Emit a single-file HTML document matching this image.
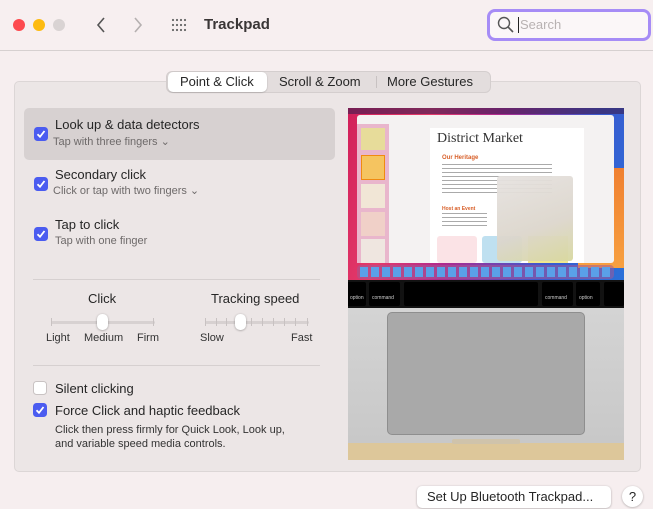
<!DOCTYPE html>
<html><head><meta charset="utf-8"><style>
*{margin:0;padding:0;box-sizing:border-box}
body{width:653px;height:509px;background:#f6eeef;font-family:"Liberation Sans",sans-serif;position:relative;overflow:hidden;color:#262626}
.a{position:absolute}
.cb{position:absolute;width:14px;height:14px;border-radius:3.5px;background:#4b5cf0;}
.cb svg{position:absolute;left:2px;top:2px}
.t{font-size:13px;color:#262626;white-space:nowrap}
.s{font-size:11px;color:#6e6a6a;white-space:nowrap}
</style></head><body>
<div class="a" style="left:0;top:0;width:653px;height:51px;background:#f7eff0;border-bottom:1px solid #d6d0d0"></div>
<div class="a" style="left:13px;top:19px;width:12px;height:12px;border-radius:50%;background:#fd4a4f"></div>
<div class="a" style="left:33px;top:19px;width:12px;height:12px;border-radius:50%;background:#fdbb10"></div>
<div class="a" style="left:53px;top:19px;width:12px;height:12px;border-radius:50%;background:#d9d3d3"></div>
<svg class="a" style="left:95px;top:16px" width="12" height="18"><path d="M9 2 L3 9 L9 16" stroke="#555" stroke-width="1.6" fill="none"/></svg>
<svg class="a" style="left:132px;top:16px" width="12" height="18"><path d="M3 2 L9 9 L3 16" stroke="#b5b0b0" stroke-width="1.6" fill="none"/></svg>
<svg class="a" style="left:171px;top:18px" width="18" height="14" fill="#666">
<circle cx="2" cy="2" r="1.1"/><circle cx="6" cy="2" r="1.1"/><circle cx="10" cy="2" r="1.1"/><circle cx="14" cy="2" r="1.1"/>
<circle cx="2" cy="7" r="1.1"/><circle cx="6" cy="7" r="1.1"/><circle cx="10" cy="7" r="1.1"/><circle cx="14" cy="7" r="1.1"/>
<circle cx="2" cy="12" r="1.1"/><circle cx="6" cy="12" r="1.1"/><circle cx="10" cy="12" r="1.1"/><circle cx="14" cy="12" r="1.1"/></svg>
<div class="a" style="left:204px;top:16px;font-size:15px;font-weight:bold;color:#3a3636">Trackpad</div>
<div class="a" style="left:487px;top:9px;width:164px;height:32px;border:3px solid #a68cf6;border-radius:8px;background:#fbf7f8"></div>
<svg class="a" style="left:497px;top:16px" width="18" height="18"><circle cx="7" cy="7" r="5.5" stroke="#555" stroke-width="1.4" fill="none"/><path d="M11 11 L16 16" stroke="#555" stroke-width="1.6"/></svg>
<div class="a" style="left:518px;top:17px;width:1px;height:16px;background:#222"></div>
<div class="a" style="left:520px;top:17px;font-size:13px;color:#b8b2b2">Search</div>
<div class="a" style="left:14px;top:81px;width:627px;height:391px;background:#ece6e6;border:1px solid #dcd6d6;border-radius:5px"></div>
<div class="a" style="left:166px;top:71px;width:325px;height:22px;background:#e3dddd;border:1px solid #d4cece;border-radius:6px"></div>
<div class="a" style="left:168px;top:72px;width:99px;height:20px;background:#fff;border-radius:5px;box-shadow:0 0.5px 1.5px rgba(0,0,0,.25)"></div>
<div class="a t" style="left:180px;top:74px">Point &amp; Click</div>
<div class="a t" style="left:279px;top:74px">Scroll &amp; Zoom</div>
<div class="a" style="left:376px;top:76px;width:1px;height:12px;background:#c8c2c2"></div>
<div class="a t" style="left:387px;top:74px">More Gestures</div>
<div class="a" style="left:24px;top:108px;width:311px;height:52px;background:#d7d1d1;border-radius:5px"></div>
<div class="cb" style="left:34px;top:127px"><svg width="10" height="10"><path d="M1.5 5.2 L4 7.8 L8.5 2" stroke="#fff" stroke-width="1.8" fill="none"/></svg></div>
<div class="a t" style="left:55px;top:117px">Look up &amp; data detectors</div>
<div class="a s" style="left:53px;top:135px">Tap with three fingers ⌄</div>
<div class="cb" style="left:34px;top:177px"><svg width="10" height="10"><path d="M1.5 5.2 L4 7.8 L8.5 2" stroke="#fff" stroke-width="1.8" fill="none"/></svg></div>
<div class="a t" style="left:55px;top:167px">Secondary click</div>
<div class="a s" style="left:53px;top:184px">Click or tap with two fingers ⌄</div>
<div class="cb" style="left:34px;top:227px"><svg width="10" height="10"><path d="M1.5 5.2 L4 7.8 L8.5 2" stroke="#fff" stroke-width="1.8" fill="none"/></svg></div>
<div class="a t" style="left:55px;top:217px">Tap to click</div>
<div class="a s" style="left:55px;top:235px">Tap with one finger</div>
<div class="a" style="left:33px;top:279px;width:287px;height:1px;background:#d6d0d0"></div>
<div class="a t" style="left:88px;top:291px">Click</div>
<div class="a" style="left:51px;top:321px;width:104px;height:3px;background:#d7d1d1;border-radius:2px"></div>
<div class="a" style="left:51px;top:318px;width:1px;height:8px;background:#c8c2c2"></div>
<div class="a" style="left:153px;top:318px;width:1px;height:8px;background:#c8c2c2"></div>
<div class="a" style="left:97px;top:314px;width:11px;height:16px;background:#fff;border-radius:5px;box-shadow:0 0.5px 2px rgba(0,0,0,.35)"></div>
<div class="a s" style="left:46px;top:332px;color:#333">Light</div>
<div class="a s" style="left:84px;top:332px;color:#333">Medium</div>
<div class="a s" style="left:137px;top:332px;color:#333">Firm</div>
<div class="a t" style="left:211px;top:291px">Tracking speed</div>
<div class="a" style="left:205px;top:321px;width:104px;height:3px;background:#d7d1d1;border-radius:2px"></div>
<div class="a" style="left:205px;top:318px;width:1px;height:8px;background:#c8c2c2"></div>
<div class="a" style="left:216px;top:318px;width:1px;height:8px;background:#c8c2c2"></div>
<div class="a" style="left:226px;top:318px;width:1px;height:8px;background:#c8c2c2"></div>
<div class="a" style="left:251px;top:318px;width:1px;height:8px;background:#c8c2c2"></div>
<div class="a" style="left:262px;top:318px;width:1px;height:8px;background:#c8c2c2"></div>
<div class="a" style="left:273px;top:318px;width:1px;height:8px;background:#c8c2c2"></div>
<div class="a" style="left:284px;top:318px;width:1px;height:8px;background:#c8c2c2"></div>
<div class="a" style="left:295px;top:318px;width:1px;height:8px;background:#c8c2c2"></div>
<div class="a" style="left:307px;top:318px;width:1px;height:8px;background:#c8c2c2"></div>
<div class="a" style="left:235px;top:314px;width:11px;height:16px;background:#fff;border-radius:5px;box-shadow:0 0.5px 2px rgba(0,0,0,.35)"></div>
<div class="a s" style="left:200px;top:332px;color:#333">Slow</div>
<div class="a s" style="left:291px;top:332px;color:#333">Fast</div>
<div class="a" style="left:33px;top:365px;width:287px;height:1px;background:#d6d0d0"></div>
<div class="a" style="left:33px;top:381px;width:14px;height:14px;border-radius:3.5px;background:#fff;border:1px solid #c9c3c3"></div>
<div class="a t" style="left:55px;top:381px">Silent clicking</div>
<div class="cb" style="left:33px;top:403px"><svg width="10" height="10"><path d="M1.5 5.2 L4 7.8 L8.5 2" stroke="#fff" stroke-width="1.8" fill="none"/></svg></div>
<div class="a t" style="left:55px;top:403px">Force Click and haptic feedback</div>
<div class="a s" style="left:55px;top:423px;color:#333;line-height:14px">Click then press firmly for Quick Look, Look up,<br>and variable speed media controls.</div>
<div class="a" style="left:348px;top:108px;width:276px;height:352px;background:#c9c9c9;overflow:hidden">
 <div class="a" style="left:0;top:0;width:276px;height:172px;background:linear-gradient(110deg,#d11f5a 0%,#e43a6a 25%,#b02a8f 45%,#3a5ad0 75%,#2a70d8 100%)"></div>
 <div class="a" style="left:230px;top:60px;width:46px;height:100px;background:linear-gradient(180deg,#f08030,#f7a040)"></div>
 <div class="a" style="left:0;top:0;width:276px;height:6px;background:rgba(60,30,80,.6)"></div>
 <div class="a" style="left:9px;top:7px;width:257px;height:148px;background:#f4f2f2;border-radius:3px"></div>
 <div class="a" style="left:9px;top:16px;width:32px;height:139px;background:#e9b6cc"></div>
 <div class="a" style="left:13px;top:20px;width:24px;height:22px;background:#e7dc9a"></div>
 <div class="a" style="left:13px;top:47px;width:24px;height:25px;background:#f5c460;border:1px solid #f08a10"></div>
 <div class="a" style="left:13px;top:76px;width:24px;height:24px;background:#f1e6d6"></div>
 <div class="a" style="left:13px;top:104px;width:24px;height:24px;background:#f0d0c8"></div>
 <div class="a" style="left:13px;top:131px;width:24px;height:24px;background:#efe6e0"></div>
 <div class="a" style="left:82px;top:20px;width:154px;height:135px;background:#fff"></div>
 <div class="a" style="left:89px;top:23px;font-family:'Liberation Serif',serif;font-size:14px;color:#333">District Market</div>
 <div class="a" style="left:94px;top:47px;font-size:6px;font-weight:bold;color:#d8602a">Our Heritage</div>
 <div class="a" style="left:94px;top:56px;width:110px;height:30px;background:repeating-linear-gradient(180deg,#aaa 0 1px,#fff 1px 4px)"></div>
 <div class="a" style="left:94px;top:98px;font-size:5px;font-weight:bold;color:#d8602a">Host an Event</div>
 <div class="a" style="left:94px;top:105px;width:45px;height:15px;background:repeating-linear-gradient(180deg,#aaa 0 1px,#fff 1px 4px)"></div>
 <div class="a" style="left:89px;top:128px;width:40px;height:27px;background:#fbe3e6;border-radius:3px"></div>
 <div class="a" style="left:134px;top:128px;width:40px;height:27px;background:#bfe0f0;border-radius:3px"></div>
 <div class="a" style="left:180px;top:128px;width:40px;height:27px;background:#f0e890"></div>
 <div class="a" style="left:149px;top:68px;width:76px;height:85px;background:linear-gradient(160deg,#e6e2e0,#dcd6cc 60%,#d8d8a0);opacity:.95;border-radius:3px"></div>
 <div class="a" style="left:9px;top:157px;width:257px;height:14px;background:rgba(160,90,150,.55);border-radius:4px"></div>
 <div class="a" style="left:12px;top:159px;width:250px;height:10px;background:repeating-linear-gradient(90deg,#5aa0e8 0 8px,transparent 8px 11px)"></div>
 <div class="a" style="left:0;top:172px;width:276px;height:28px;background:#121212"></div>
 <div class="a" style="left:-2px;top:174px;width:20px;height:24px;background:#000;border-radius:2px"></div>
 <div class="a" style="left:21px;top:174px;width:31px;height:24px;background:#000;border-radius:2px"></div>
 <div class="a" style="left:56px;top:174px;width:134px;height:24px;background:#000;border-radius:2px"></div>
 <div class="a" style="left:194px;top:174px;width:31px;height:24px;background:#000;border-radius:2px"></div>
 <div class="a" style="left:228px;top:174px;width:24px;height:24px;background:#000;border-radius:2px"></div>
 <div class="a" style="left:256px;top:174px;width:20px;height:24px;background:#000;border-radius:2px"></div>
 <div class="a" style="left:2px;top:187px;font-size:5px;color:#ccc">option</div>
 <div class="a" style="left:24px;top:187px;font-size:5px;color:#ccc">command</div>
 <div class="a" style="left:197px;top:187px;font-size:5px;color:#ccc">command</div>
 <div class="a" style="left:231px;top:187px;font-size:5px;color:#ccc">option</div>
 <div class="a" style="left:0;top:200px;width:276px;height:135px;background:linear-gradient(180deg,#d4d4d4,#c8c8c8)"></div>
 <div class="a" style="left:39px;top:204px;width:198px;height:123px;background:#a9a9a9;border:1px solid #8e8e8e;border-radius:5px"></div>
 <div class="a" style="left:0;top:335px;width:276px;height:17px;background:#ddc79a"></div>
 <div class="a" style="left:104px;top:331px;width:68px;height:5px;background:#cfc3ab;border-radius:2px"></div>
</div>
<div class="a" style="left:417px;top:486px;width:194px;height:22px;background:#fff;border-radius:5px;box-shadow:0 0.5px 2px rgba(0,0,0,.3)"></div>
<div class="a t" style="left:427px;top:489px">Set Up Bluetooth Trackpad...</div>
<div class="a" style="left:622px;top:486px;width:21px;height:21px;border-radius:50%;background:#fff;box-shadow:0 0.5px 2px rgba(0,0,0,.3);font-size:13px;text-align:center;line-height:21px">?</div>
</body></html>
